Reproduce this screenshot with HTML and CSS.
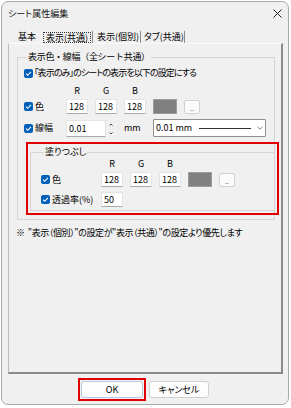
FILE: index.html
```html
<!DOCTYPE html>
<html lang="ja">
<head>
<meta charset="utf-8">
<link rel="stylesheet" href="styles.css">
</head>
<body>
<div class="window">
  <div class="titlebar">
    <span class="title">シート属性編集</span>
    <svg class="close" width="9" height="9" viewBox="0 0 9 9"><path d="M0.5 0.5L8.5 8.5M8.5 0.5L0.5 8.5" stroke="#222" stroke-width="1" fill="none"/></svg>
  </div>
  <div class="tabs">
    <div class="tab t1">基本</div>
    <div class="tab t2"><span class="focus">表示(共通)</span></div>
    <div class="tab t3">表示(個別)</div>
    <div class="tab t4">タブ(共通)</div>
  </div>
  <div class="panel">
    <fieldset class="grp outer">
      <legend>表示色・線幅（全シート共通）</legend>
      <div class="chkrow">
        <svg class="cb" width="9" height="9" viewBox="0 0 9 9"><rect width="9" height="9" rx="2" fill="#005fb8"/><path d="M2 4.7L3.7 6.3L7 2.8" stroke="#fff" stroke-width="1.1" fill="none"/></svg>
        <span class="chktext">「表示のみ」のシートの表示を以下の設定にする</span>
      </div>
      <div class="rgbhead">
        <span class="sp"></span><span class="h">R</span><span class="h">G</span><span class="h">B</span>
      </div>
      <div class="row">
        <div class="lbl">
          <svg class="cb" width="9" height="9" viewBox="0 0 9 9"><rect width="9" height="9" rx="2" fill="#005fb8"/><path d="M2 4.7L3.7 6.3L7 2.8" stroke="#fff" stroke-width="1.1" fill="none"/></svg>
          <span>色</span>
        </div>
        <span class="num">128</span><span class="num">128</span><span class="num">128</span>
        <span class="swatch"></span>
        <span class="dots">..</span>
      </div>
      <div class="row row2">
        <div class="lbl">
          <svg class="cb" width="9" height="9" viewBox="0 0 9 9"><rect width="9" height="9" rx="2" fill="#005fb8"/><path d="M2 4.7L3.7 6.3L7 2.8" stroke="#fff" stroke-width="1.1" fill="none"/></svg>
          <span>線幅</span>
        </div>
        <span class="num wide">0.01</span>
        <span class="spin">
          <svg width="4" height="15" viewBox="0 0 4 15"><path d="M0.5 4.5L2 3L3.5 4.5M0.5 11.5L2 13L3.5 11.5" stroke="#333" stroke-width="0.9" fill="none"/></svg>
        </span>
        <span class="mm">mm</span>
        <span class="dd">
          <span class="ddtext">0.01 mm</span>
          <span class="ddline"></span>
          <svg class="chev" width="6" height="4" viewBox="0 0 6 4"><path d="M0.5 0.8L3 3.2L5.5 0.8" stroke="#777" stroke-width="0.9" fill="none"/></svg>
        </span>
      </div>
      <div class="red">
        <fieldset class="grp inner">
          <legend>塗りつぶし</legend>
          <div class="rgbhead in">
            <span class="sp"></span><span class="h">R</span><span class="h">G</span><span class="h">B</span>
          </div>
          <div class="row">
            <div class="lbl">
              <svg class="cb" width="9" height="9" viewBox="0 0 9 9"><rect width="9" height="9" rx="2" fill="#005fb8"/><path d="M2 4.7L3.7 6.3L7 2.8" stroke="#fff" stroke-width="1.1" fill="none"/></svg>
              <span>色</span>
            </div>
            <span class="num">128</span><span class="num">128</span><span class="num">128</span>
            <span class="swatch"></span>
            <span class="dots">..</span>
          </div>
          <div class="row row3">
            <div class="lbl">
              <svg class="cb" width="9" height="9" viewBox="0 0 9 9"><rect width="9" height="9" rx="2" fill="#005fb8"/><path d="M2 4.7L3.7 6.3L7 2.8" stroke="#fff" stroke-width="1.1" fill="none"/></svg>
              <span>透過率(%)</span>
            </div>
            <span class="num">50</span>
          </div>
        </fieldset>
      </div>
    </fieldset>
    <p class="note">※&nbsp;&nbsp;"表示（個別）"の設定が"表示（共通）"の設定より優先します</p>
  </div>
  <div class="buttons">
    <span class="okwrap"><span class="btn ok">OK</span></span>
    <span class="btn cancel">キャンセル</span>
  </div>
</div>
</body>
</html>
```
FILE: styles.css
```css
* { box-sizing: border-box; }
body {
  margin: 0;
  background: #fff;
  font-family: "Noto Sans CJK JP", "Noto Sans", sans-serif;
  font-size: 9px;
  line-height: 12px;
  color: #000;
  font-feature-settings: "palt";
}
.window {
  margin: 1px;
  width: 288px;
  height: 404px;
  border: 1px solid #a9a9a9;
  border-radius: 7px;
  background: #f0f0f0;
  display: flex;
  flex-direction: column;
  overflow: hidden;
}
.titlebar {
  height: 23px;
  flex: none;
  display: flex;
  align-items: center;
  justify-content: space-between;
  padding: 0 6px;
}
.title { color: #1a1a1a; }
.close { display: block; }
.tabs {
  height: 18px;
  flex: none;
  display: flex;
  align-items: flex-end;
  padding-left: 6px;
}
.tab {
  height: 12px;
  white-space: nowrap;
}
.t1 { width: 34px; padding-left: 10px; }
.t2 { width: 51px; padding-left: 1px; border-right: 1px solid #8c8c8c; }
.t3 { width: 48px; padding-left: 4px; border-right: 1px solid #8c8c8c; }
.t4 { width: 44px; padding-left: 3px; border-right: 1px solid #8c8c8c; }
.focus {
  display: block;
  margin-top: 1px;
  height: 11px;
  width: 48px;
  border: 1px dotted #333;
  padding: 0 0 0 2px;
  line-height: 9px;
}
.panel {
  flex: none;
  margin-left: 6px;
  width: 275px;
  height: 331px;
  border-style: solid;
  border-width: 1px 2px 2px 1px;
  border-color: #fafafa #8a8a8a #8a8a8a #bcbcbc;
  background: #f0f0f0;
}
.grp {
  margin: 0;
  padding: 0;
  border: 1px solid #d6d6d6;
  min-width: 0;
}
.grp legend {
  margin-left: 3px;
  padding: 0 1px;
  line-height: 12px;
}
.outer {
  margin: 7px 0 0 8px;
  width: 258px;
  padding-left: 6px;
}
.outer > legend {
  font-feature-settings: normal;
  letter-spacing: -0.3px;
}
.chkrow {
  margin-top: 4px;
  height: 12px;
  display: flex;
  align-items: center;
  gap: 1px;
  white-space: nowrap;
}
.chktext { letter-spacing: -0.9px; }
.cb { display: block; flex: none; }
.rgbhead {
  margin-top: 6px;
  height: 12px;
  display: flex;
}
.rgbhead .sp { width: 42px; flex: none; }
.rgbhead .h { width: 22px; margin-right: 7px; text-align: center; }
.rgbhead.in { margin-top: 0; }
.rgbhead.in .sp { width: 60px; }
.row {
  margin-top: 2px;
  height: 15px;
  display: flex;
  align-items: center;
}
.row2 { margin-top: 4px; height: 20px; }
.row3 { margin-top: 5px; }
.lbl {
  width: 42px;
  flex: none;
  display: flex;
  align-items: center;
  gap: 2px;
  white-space: nowrap;
}
.inner .lbl { width: 60px; }
.num {
  width: 22px;
  height: 15px;
  margin-right: 7px;
  flex: none;
  background: #fff;
  border: 1px solid #e4e4e4;
  border-bottom-color: #a9a9a9;
  border-radius: 1px;
  padding-left: 2px;
  line-height: 13px;
}
.num.wide { width: 40px; height: 17px; margin-right: 0; line-height: 15px; }
.swatch {
  width: 24px;
  height: 15px;
  margin-right: 7px;
  flex: none;
  background: #808080;
  border: 1px solid #9c9c9c;
}
.dots {
  width: 16px;
  height: 14px;
  flex: none;
  background: #fbfbfb;
  border: 1px solid #d2d2d2;
  border-radius: 2px;
  font-size: 7px;
  line-height: 14px;
  text-align: center;
  color: #555;
}
.spin {
  width: 18px;
  flex: none;
  padding-left: 3px;
  display: flex;
  align-items: center;
}
.spin svg { display: block; }
.mm { width: 29px; flex: none; }
.dd {
  width: 113px;
  height: 18px;
  flex: none;
  background: #fff;
  border: 1px solid #8f8f8f;
  border-radius: 1px;
  display: flex;
  align-items: center;
  padding-left: 2px;
}
.ddtext { width: 43px; flex: none; white-space: nowrap; }
.ddline { width: 52px; height: 1px; background: #333; flex: none; }
.chev { display: block; margin-left: 6px; }
.red {
  margin: 4px 0 4px 2px;
  width: 253px;
  border: 2px solid #e00000;
}
.inner {
  margin: 2px 2px 2px 2px;
  width: 245px;
  padding: 0 0 3px 10px;
}
.note {
  margin: 7px 0 0 7px;
  height: 12px;
  white-space: nowrap;
  letter-spacing: -0.4px;
}
.buttons {
  flex: none;
  display: flex;
  align-items: center;
  padding: 4px 0 0 76px;
}
.okwrap {
  border: 2px solid #e00000;
  padding: 1px;
}
.btn {
  display: block;
  height: 17px;
  line-height: 15px;
  text-align: center;
  background: #fdfdfd;
  border: 1px solid #d0d0d0;
  border-radius: 3px;
}
.ok { width: 62px; border-color: #b3cbe3; }
.cancel { width: 60px; margin-left: 3px; }
```
